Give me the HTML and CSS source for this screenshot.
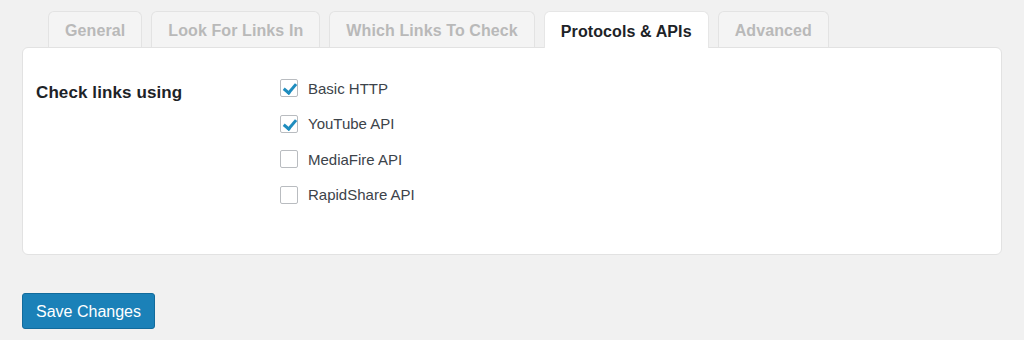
FILE: index.html
```html
<!DOCTYPE html>
<html lang="en">
<head>
  <meta charset="UTF-8">
  <title>Link Checker Settings</title>
  <link rel="stylesheet" href="styles.css">
</head>
<body>
  <div class="tabs">
    <a href="#" class="tab">General</a>
    <a href="#" class="tab">Look For Links In</a>
    <a href="#" class="tab">Which Links To Check</a>
    <a href="#" class="tab active">Protocols &amp; APIs</a>
    <a href="#" class="tab">Advanced</a>
  </div>

  <div class="panel">
    <div class="field-label">Check links using</div>
    <div class="options">
      <label class="option"><span class="box checked"></span>Basic HTTP</label>
      <label class="option"><span class="box checked"></span>YouTube API</label>
      <label class="option"><span class="box"></span>MediaFire API</label>
      <label class="option"><span class="box"></span>RapidShare API</label>
    </div>
  </div>

  <button class="save-button">Save Changes</button>
</body>
</html>
```

FILE: styles.css
```css
body {
  margin: 0;
  padding-top: 11px;
  background: #f1f1f1;
  font-family: 'Liberation Sans', Arial, sans-serif;
  color: #1d2327;
}
.tabs {
  display: flex;
  gap: 9px;
  padding-left: 48px;
  height: 36px;
  position: relative;
  z-index: 1;
}
.tab {
  display: flex;
  align-items: center;
  padding: 3px 16px 0;
  height: 36px;
  box-sizing: border-box;
  border: 1px solid #e3e3e3;
  border-bottom: none;
  border-radius: 6px 6px 0 0;
  background: #f4f4f4;
  color: #b9b9b9;
  font-size: 16px;
  font-weight: bold;
  letter-spacing: 0.1px;
  text-decoration: none;
}
.tab.active {
  background: #fff;
  color: #1d2327;
  height: 37px;
  border-color: #e6e6e6;
}
.panel {
  display: flex;
  margin: 0 22px;
  height: 208px;
  box-sizing: border-box;
  background: #fff;
  border: 1px solid #e2e2e2;
  border-radius: 6px;
  padding: 31px 0 0 13px;
}
.field-label {
  width: 244px;
  font-size: 17px;
  font-weight: bold;
  letter-spacing: 0.1px;
  padding-top: 4px;
}
.options {
  display: flex;
  flex-direction: column;
  gap: 17.5px;
}
.option {
  display: flex;
  align-items: center;
  gap: 10px;
  height: 18px;
  font-size: 15px;
  color: #3c434a;
}
.box {
  width: 18px;
  height: 18px;
  box-sizing: border-box;
  border: 1px solid #b9bcc0;
  border-radius: 2px;
  background: #fff;
  position: relative;
}
.box.checked::after {
  content: '';
  position: absolute;
  left: 5px;
  top: 1px;
  width: 5px;
  height: 10px;
  border: solid #1e8cbe;
  border-width: 0 3px 3px 0;
  transform: rotate(40deg);
}
.save-button {
  margin: 38px 0 0 22px;
  padding-top: 2px;
  height: 36px;
  width: 133px;
  background: #1b81b8;
  border: 1px solid #126b9c;
  border-radius: 3px;
  color: #fff;
  font-family: 'Liberation Sans', Arial, sans-serif;
  font-size: 16px;
  cursor: pointer;
}
```
